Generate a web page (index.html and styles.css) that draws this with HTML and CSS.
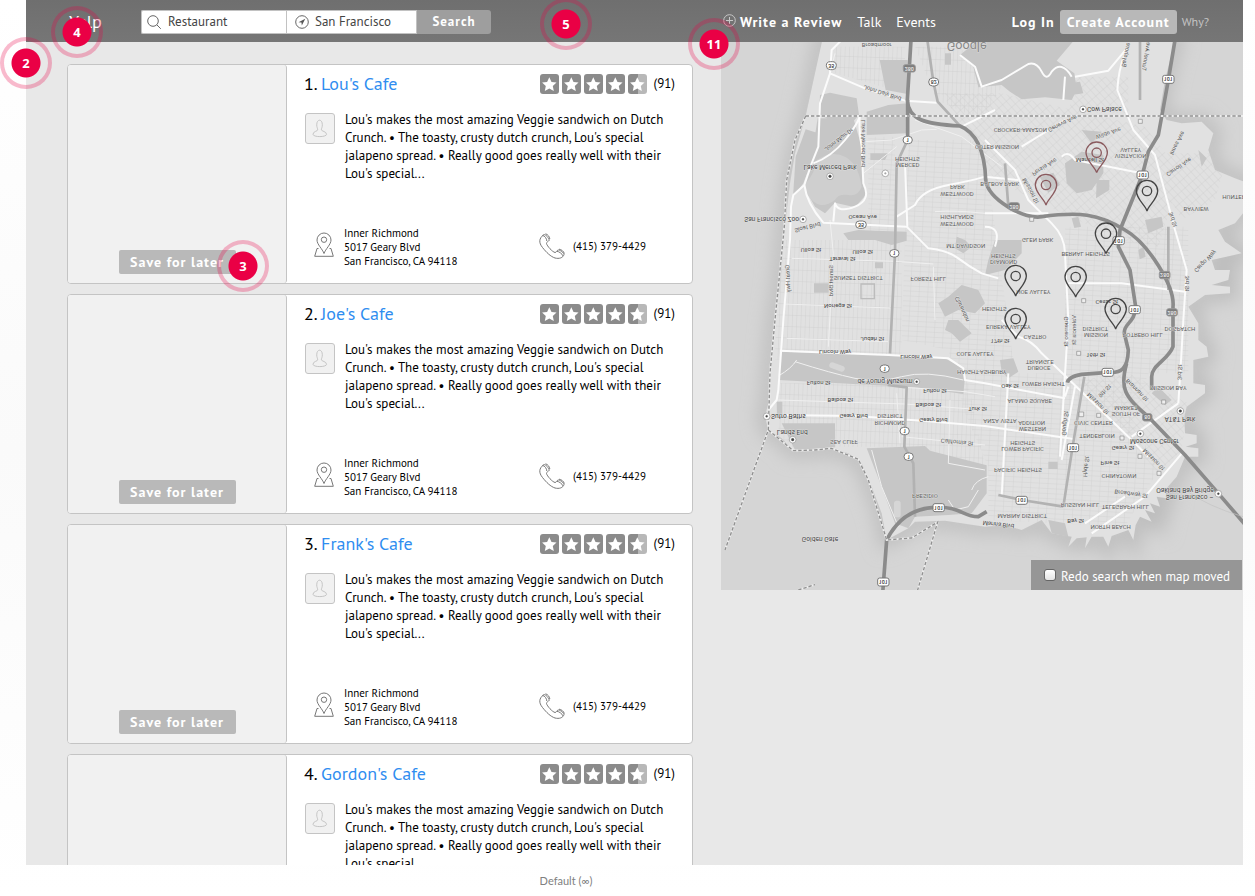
FILE: index.html
```html
<!DOCTYPE html>
<html lang="en">
<head>
<meta charset="utf-8">
<title>Yelp</title>
<link rel="stylesheet" href="styles.css">
</head>
<body>
<svg class="sprite" aria-hidden="true">
  <defs>
    <linearGradient id="half"><stop offset=".5" stop-color="#8b8b8b"/><stop offset=".5" stop-color="#b8b8b8"/></linearGradient>
    <symbol id="star" viewBox="0 0 19 20"><rect width="19" height="20" rx="3" fill="#8b8b8b"/><path fill="#fff" d="M9.300 3.200l2.200 4.800 5 .6-3.700 3.500 1 5-4.500-2.500-4.500 2.500 1-5L2.100 8.600l5-.6z"/></symbol>
    <symbol id="star-half" viewBox="0 0 19 20"><rect width="19" height="20" rx="3" fill="url(#half)"/><path fill="#fff" d="M9.300 3.200l2.200 4.800 5 .6-3.700 3.500 1 5-4.500-2.500-4.500 2.500 1-5L2.100 8.600l5-.6z"/></symbol>
    <symbol id="person" viewBox="0 0 30 31"><path fill="none" stroke="#c2c2c2" d="M11.500 11.500c0-6.500 6-6.500 6 0 0 3-1 3.500-1 5.500 0 1.500 5.500 1.500 5.500 4.700 0 3.300-14.500 3.300-14.500 0 0-3.200 5-3.200 5-4.700 0-2-1-2.500-1-5.500z"/></symbol>
    <symbol id="place" viewBox="0 0 20 25"><g fill="none" stroke="#777"><path d="M10 21.500C8.500 17 3 12.500 3 8a7 7 0 0 1 14 0c0 4.500-5.500 9-7 13.500z"/><circle cx="10" cy="7.700" r="2.700"/><path d="M4.500 16.500H3L.7 24.300h18.600L17 16.500h-1.500"/></g></symbol>
    <symbol id="phone" viewBox="0 0 26 26"><g fill="none" stroke="#777" stroke-linejoin="round"><path d="M4.500 1.800C0 5.500-.5 9.500 3.500 14.500s8 9 12.500 10.500c4 1 8 0 9-3.500.3-1.500-4.500-5-6-4.500-1.200.5-1.500 2.500-3 2.500-2.500-.5-8-6.500-8.500-9-.2-1.500 2-2 2.700-3.200C10.500 6 6.500.5 4.500 1.800z"/><path d="M3.800 2.500c1.700 0 4.200 3.500 4 5.500M6.500.8c2 .2 4.500 3.500 4.300 5.200M18 18.300c1.500 0 5.500 2.500 5.800 4.500M20 16.200c2 0 5 2.300 5.300 4.300"/></g></symbol>
    <symbol id="pin" viewBox="-35 -96 70 98" overflow="visible"><path d="M0 0C-4-16-32-36-32-60A32 32 0 1 1 32-60C32-36 4-16 0 0z"/><circle cy="-60" r="14"/></symbol>
    <pattern id="grid" width="26" height="15" patternUnits="userSpaceOnUse" patternTransform="rotate(3)"><path d="M0 0H26M0 0V15" fill="none" stroke="#cdcdcd" stroke-width="2"/></pattern>
    <pattern id="grid-wide" width="13" height="34" patternUnits="userSpaceOnUse" patternTransform="rotate(2)"><path d="M0 0H13M0 0V34" fill="none" stroke="#cdcdcd" stroke-width="2"/></pattern>
    <pattern id="grid-slant" width="15" height="24" patternUnits="userSpaceOnUse" patternTransform="rotate(-42)"><path d="M0 0H15M0 0V24" fill="none" stroke="#cdcdcd" stroke-width="2"/></pattern>
    <filter id="shore" x="-20%" y="-20%" width="140%" height="140%"><feGaussianBlur stdDeviation="26"/></filter>
  </defs>
</svg>

<main class="stage">
  <header class="nav">
    <a class="logo" href="#">Yelp</a>
    <form class="search">
      <label class="field field-what">
        <svg width="15" height="15" viewBox="0 0 15 15" aria-hidden="true"><g fill="none" stroke="#666"><circle cx="6" cy="6" r="5.300"/><path d="M9.800 9.800l4 4"/></g></svg>
        <input type="text" value="Restaurant" aria-label="Find">
      </label>
      <label class="field field-where">
        <svg width="14" height="14" viewBox="0 0 14 14" aria-hidden="true"><circle cx="7" cy="7" r="6.300" fill="none" stroke="#666"/><path fill="#555" d="M10.300 3.800L3.500 7.200l3 .4.300 3z"/></svg>
        <input type="text" value="San Francisco" aria-label="Near">
      </label>
      <button class="search-button" type="submit">Search</button>
    </form>
    <nav class="links">
      <a class="strong" href="#"><svg width="13" height="13" viewBox="0 0 13 13" aria-hidden="true"><g fill="none" stroke="#c8c8c8"><circle cx="6.500" cy="6.500" r="5.800"/><path d="M6.500 3v7M3 6.500h7"/></g></svg>Write a Review</a>
      <a href="#">Talk</a>
      <a href="#">Events</a>
    </nav>
    <div class="account">
      <a class="strong" href="#">Log In</a>
      <button class="create" type="button">Create Account</button>
      <a class="why" href="#">Why?</a>
    </div>
  </header>

  <div class="content">
    <section class="results">
      <article class="card">
        <div class="photo"><button class="save" type="button">Save for later</button></div>
        <div class="info">
          <div class="head"><h2>1. <a href="#">Lou's Cafe</a></h2><div class="rating"><svg><use href="#star"/></svg><svg><use href="#star"/></svg><svg><use href="#star"/></svg><svg><use href="#star"/></svg><svg><use href="#star-half"/></svg><span>(91)</span></div></div>
          <div class="review"><svg class="avatar"><use href="#person"/></svg><p>Lou's makes the most amazing Veggie sandwich on Dutch Crunch. • The toasty, crusty dutch crunch, Lou's special jalapeno spread. • Really good goes really well with their Lou's special...</p></div>
          <div class="contact"><svg class="place"><use href="#place"/></svg><address>Inner Richmond<br>5017 Geary Blvd<br>San Francisco, CA 94118</address><svg class="phone"><use href="#phone"/></svg><span>(415) 379-4429</span></div>
        </div>
      </article>
      <article class="card">
        <div class="photo"><button class="save" type="button">Save for later</button></div>
        <div class="info">
          <div class="head"><h2>2. <a href="#">Joe's Cafe</a></h2><div class="rating"><svg><use href="#star"/></svg><svg><use href="#star"/></svg><svg><use href="#star"/></svg><svg><use href="#star"/></svg><svg><use href="#star-half"/></svg><span>(91)</span></div></div>
          <div class="review"><svg class="avatar"><use href="#person"/></svg><p>Lou's makes the most amazing Veggie sandwich on Dutch Crunch. • The toasty, crusty dutch crunch, Lou's special jalapeno spread. • Really good goes really well with their Lou's special...</p></div>
          <div class="contact"><svg class="place"><use href="#place"/></svg><address>Inner Richmond<br>5017 Geary Blvd<br>San Francisco, CA 94118</address><svg class="phone"><use href="#phone"/></svg><span>(415) 379-4429</span></div>
        </div>
      </article>
      <article class="card">
        <div class="photo"><button class="save" type="button">Save for later</button></div>
        <div class="info">
          <div class="head"><h2>3. <a href="#">Frank's Cafe</a></h2><div class="rating"><svg><use href="#star"/></svg><svg><use href="#star"/></svg><svg><use href="#star"/></svg><svg><use href="#star"/></svg><svg><use href="#star-half"/></svg><span>(91)</span></div></div>
          <div class="review"><svg class="avatar"><use href="#person"/></svg><p>Lou's makes the most amazing Veggie sandwich on Dutch Crunch. • The toasty, crusty dutch crunch, Lou's special jalapeno spread. • Really good goes really well with their Lou's special...</p></div>
          <div class="contact"><svg class="place"><use href="#place"/></svg><address>Inner Richmond<br>5017 Geary Blvd<br>San Francisco, CA 94118</address><svg class="phone"><use href="#phone"/></svg><span>(415) 379-4429</span></div>
        </div>
      </article>
      <article class="card">
        <div class="photo"><button class="save" type="button">Save for later</button></div>
        <div class="info">
          <div class="head"><h2>4. <a href="#">Gordon's Cafe</a></h2><div class="rating"><svg><use href="#star"/></svg><svg><use href="#star"/></svg><svg><use href="#star"/></svg><svg><use href="#star"/></svg><svg><use href="#star-half"/></svg><span>(91)</span></div></div>
          <div class="review"><svg class="avatar"><use href="#person"/></svg><p>Lou's makes the most amazing Veggie sandwich on Dutch Crunch. • The toasty, crusty dutch crunch, Lou's special jalapeno spread. • Really good goes really well with their Lou's special...</p></div>
          <div class="contact"><svg class="place"><use href="#place"/></svg><address>Inner Richmond<br>5017 Geary Blvd<br>San Francisco, CA 94118</address><svg class="phone"><use href="#phone"/></svg><span>(415) 379-4429</span></div>
        </div>
      </article>
    </section>

    <section class="map">
      <svg class="map-art" viewBox="18 6 1566 1644" role="img" aria-label="Map of San Francisco, mirrored north to south">
        <defs>
          <path id="coast" d="M322 0L300 100 272 228 240 340 225 430 212 540 205 620 195 740 180 840 168 960 160 1090 150 1130 160 1170 200 1195 235 1232 300 1228 345 1225 400 1240 440 1270 470 1340 500 1420 515 1500 530 1492 580 1465 600 1445 690 1442 810 1460 870 1455 920 1470 980 1440 1010 1480 1070 1490 1060 1520 1085 1495 1115 1492 1110 1525 1130 1490 1165 1490 1180 1520 1190 1488 1240 1470 1255 1500 1262 1455 1275 1430 1310 1445 1290 1410 1320 1420 1305 1390 1335 1400 1325 1370 1355 1375 1350 1350 1385 1310 1410 1250 1450 1250 1450 1225 1412 1220 1445 1210 1445 1185 1410 1180 1408 1130 1415 1100 1470 1060 1470 1035 1435 1030 1435 960 1480 950 1475 920 1450 900 1450 850 1420 800 1470 765 1545 760 1545 740 1490 735 1540 720 1545 690 1500 690 1490 660 1580 640 1530 605 1510 570 1560 550 1600 500V430L1560 415 1500 390 1480 330 1495 280 1460 245 1400 250 1355 240 1335 210 1350 120 1380 0z"/>
          <clipPath id="land"><use href="#coast"/></clipPath>
        </defs>
        <rect width="1600" height="1660" fill="#d5d5d5"/>
        <use href="#coast" fill="none" stroke="#bdbdbd" stroke-width="44" filter="url(#shore)"/>
        <use href="#coast" fill="#e1e1e1"/>
        <g clip-path="url(#land)">
          <path fill="url(#grid-wide)" d="M190 600H560V960H180zM360 20H570V160L360 100zM600 20H735L780 80 860 140 800 240 665 180zM190 1030H760L810 1280 560 1220H190z"/>
          <path fill="url(#grid)" d="M580 300H800L840 560 900 1000 1300 1000 1250 1140 1330 1290 1230 1460 820 1440V1280L750 1120 700 930 560 900zM1050 560H1420V1000H1050zM460 290H540V600H460z"/>
          <path fill="url(#grid-slant)" d="M680 160H860L1290 260 1400 400 1330 620 1220 600 1000 500 840 420zM1090 1020L1240 1000 1420 1090 1400 1230 1330 1300zM1290 340H1540L1500 480 1400 540zM1080 110H1240V220H1060z"/>
        </g>
        <g fill="#c6c6c6">
          <path d="M315 165L345 158 425 175 432 225 400 260 312 225zM308 235L415 235 440 320 445 440 455 462 420 502 360 488 330 520 300 500 267 440 290 350zM272 268L310 280 305 325 265 430 234 470 242 350zM494 60H578V162L512 150zM455 215L520 195 577 190V280L455 285zM466 340H520L510 360H466zM385 580L430 570 480 572 575 575V602L530 615 480 600 400 600zM480 667h24v18h-24zM297 730h44v28h-44zM725 590L750 600 770 620 745 640 720 625zM670 790L700 770 740 735 790 750 810 790 780 820 730 810 690 830zM690 40h18v34h-18z"/>
          <path d="M735 45L790 0H1078L1025 62 1078 100 1085 150 1070 180 990 172 920 178 885 155 860 135 790 142 775 80zM1050 370L1100 335 1165 345 1165 400 1130 450 1085 460 1055 430zM975 412L1015 398 1035 435 1000 458zM1100 270L1160 275 1130 310zM1145 420h38v30l-40 25zM1062 130L1095 125 1105 160 1070 165zM840 600L920 600 920 640 870 690 810 705 820 660zM1290 540L1340 530 1345 560 1300 580zM1450 330L1475 355 1460 380zM1270 630l16-10 6 30-18 8zM1070 535l20-5 8 30-20 4z"/>
          <path d="M200 935L420 942 540 946 690 955 752 990 745 1062 600 1042 190 1020zM185 1085H202V1132L186 1128zM200 1150H360V1222L240 1230zM455 1225L630 1218 645 1232 815 1276V1360L770 1420 700 1425 600 1430 580 1465 540 1450 500 1340zM700 840L730 840 770 880 735 905 710 880 690 870zM855 960L895 955 910 995 880 1015 860 995zM1000 1440L1050 1450 1060 1490 1010 1480zM1000 1265h28v22h-28zM1330 1040L1370 1080 1350 1095 1310 1060z"/>
        </g>
        <path fill="#cfcfcf" d="M305 360Q350 330 390 350T440 440Q430 470 400 465T360 480Q320 510 290 480T272 430Q300 400 305 360z"/>
        <g fill="#d6d6d6"><rect x="342" y="972" width="48" height="18" rx="9" transform="rotate(20 366 981)"/><rect x="537" y="1382" width="20" height="50" rx="8"/></g>
        <path fill="none" stroke="#bcbcbc" stroke-width="4" d="M438 732h40v44h-40z"/>

        <g class="road minor">
          <path d="M450 305L530 300 620 270 665 268M345 100L360 40M445 400L545 320M345 540L355 640 340 920M230 655L540 664 655 672M210 792L525 804M215 895L520 905M190 1080L570 1092 810 1110M570 1042L750 1055 840 1070M545 1060L555 1210M705 1080L700 1270M655 680L660 840M660 515Q720 510 810 520M600 240L740 290 860 380M560 1190L810 1215"/>
          <path d="M240 965Q350 1000 420 1015T560 1010 745 1020M190 1008Q230 985 245 960M470 1230L500 1340 550 1460M700 1270L810 1290M770 1350Q780 1320 820 1310M700 1380L720 1410 760 1400 790 1350"/>
        </g>
        <g class="road white">
          <path d="M380 0L350 30 345 100 315 190 310 320 290 370 268 435 235 465 228 500 225 600 205 840 190 1050 185 1080 160 1110"/>
          <path d="M345 100L450 145 570 182 665 188M268 435Q275 490 325 548L575 560 640 625Q700 632 730 655T800 700L850 715"/>
          <path d="M570 370L577 560M545 530L600 495Q620 450 700 435T810 410L910 420M435 225Q430 260 440 320L445 430Q470 480 420 500T360 490L355 545M295 370Q350 350 390 300T435 225" />
          <path d="M195 932L520 945 700 955 745 985 750 1020 810 1030 1050 1075M190 1125L420 1128 620 1142 810 1158 1080 1198"/>
          <path d="M735 45L780 80 800 140 860 120 940 72Q965 65 980 95T1010 95Q1040 60 1070 110M1230 40Q1210 90 1207 150L1255 270 1320 345 1380 570 1415 690 1405 840 1400 930 1390 1090M1080 110L1180 92 1240 20M1045 180L1050 110"/>
          <path d="M840 620Q860 560 810 560M810 300L900 390 940 480 1010 550Q1050 590 1050 640L1060 840M840 210L740 260M920 320L1050 240M1040 350Q1060 330 1080 360L1280 400M810 520H1000M860 840L910 890Q950 900 980 940L1240 1190 1300 1250M1060 730H1220L1410 755M1060 840L1035 1250M1060 1040L1050 1070M1080 1040L1040 1260M880 1000L860 1370M1250 1190L1390 1090M1405 1235L1290 1370 1130 1480M1110 1450L1230 1370"/>
        </g>
        <g class="road grey"><path d="M578 300L545 370 540 640 525 940M518 1035L575 1042 570 1170 568 1220 595 1270 600 1430M637 0L655 125 668 185 735 258M1275 0V180M1045 1400L1072 1225 1108 1010M850 1365L920 1380 1045 1400M870 370L880 500M1360 560V750"/></g>
        <g class="road highway">
          <path d="M588 0L577 180C580 240 630 252 735 258 780 275 810 330 812 420 820 480 930 540 980 530 1090 515 1150 520 1230 570 1300 610 1380 740 1374 800V920C1360 960 1310 975 1310 1010V1050M578 180V300"/>
          <path d="M1380 0L1360 120 1330 285 1300 335 1282 405 1215 570 1210 620 1245 690 1262 800C1260 850 1225 850 1228 880L1240 930C1238 985 1220 1000 1180 997L1100 1003Q1060 1010 1057 1028M1235 970C1215 1040 1225 1070 1300 1130L1410 1245 1510 1360 1600 1465"/>
          <path d="M503 1660L515 1500C540 1450 580 1405 660 1402S740 1430 790 1430L815 1415"/>
        </g>
        <path class="ferry" d="M1410 1350Q1480 1400 1584 1430"/>
        <path class="boundary-base" d="M272 228H1600M272 228L240 300 215 420 208 560 190 740 178 860 165 1000 160 1170 30 1530M160 1170L235 1232 300 1230 350 1225 430 1258 460 1320 515 1500 590 1494 668 1446 605 1660M250 1650L300 1634"/>
        <path class="boundary" d="M272 228H1600M272 228L240 300 215 420 208 560 190 740 178 860 165 1000 160 1170 30 1530M160 1170L235 1232 300 1230 350 1225 430 1258 460 1320 515 1500 590 1494 668 1446 605 1660M250 1650L300 1634"/>

        <g class="label">
          <text x="485" y="15">Broadmoor</text><text class="big" x="755" y="20">Google</text>
          <text x="345" y="382" class="place-name">Lake Merced Park</text><text x="170" y="537" class="place-name">San Francisco Zoo</text>
          <text x="577" y="357">HEIGHTS</text><text x="578" y="377">MERCED</text><text x="727" y="443">PARK</text><text x="726" y="463">WESTWOOD</text>
          <text x="726" y="532">HIGHLANDS</text><text x="726" y="552">WESTWOOD</text><text x="752" y="618">MT DAVIDSON</text><text x="443" y="531" class="st">Ocean Ave</text>
          <text x="288" y="630" class="st">Ulloa St</text><text x="443" y="637" class="st">Ulloa St</text><text x="382" y="657" class="st">Taraval St</text><text x="430" y="714">SUNSET DISTRICT</text><text x="640" y="719">FOREST HILL</text><text x="369" y="798" class="st">Noriega St</text>
          <g transform="rotate(18 502 160)"><text x="502" y="160">John Daly Blvd</text></g><g transform="rotate(-38 372 300)"><text x="372" y="300">John Muir Dr</text></g><g transform="rotate(90 442 310)"><text x="442" y="310">Lake Merced Blvd</text></g><g transform="rotate(-14 278 563)"><text x="278" y="563">Sloat Blvd</text></g><g transform="rotate(88 217 716)"><text x="217" y="716">Great Hwy</text></g><g transform="rotate(90 346 722)"><text x="346" y="722">Sunset Blvd</text></g>
          <text x="1168" y="207" class="place-name">Cow Palace</text><text x="916" y="272">CROCKER-AMAZON</text><text x="846" y="322">OUTER MISSION</text><text x="1247" y="330">VALLEY</text><text x="1247" y="350">VISITACION</text>
          <text x="854" y="433">BALBOA PARK</text><text x="1443" y="507">BAYVIEW</text><text x="1562" y="471">HUNTERS</text><text x="968" y="600">GLEN PARK</text><text x="1112" y="642">BERNAL HEIGHTS</text><text x="865" y="649">HEIGHTS</text><text x="866" y="668">DIAMOND</text><text x="955" y="757">NOE VALLEY</text><text x="838" y="808">HEIGHTS</text><text x="1175" y="787" class="st">Cesar St</text>
          <g transform="rotate(-26 1043 252)"><text x="1043" y="252">Geneva Ave</text></g><g transform="rotate(-18 1180 281)"><text x="1180" y="281">Wilde Ave</text></g><text x="1125" y="360" class="st">Mansell St</text><g transform="rotate(-32 989 382)"><text x="989" y="382">Persia Ave</text></g><g transform="rotate(62 945 453)"><text x="945" y="453">Mission St</text></g><g transform="rotate(-62 1388 310)"><text x="1388" y="310">Innes Ave</text></g><g transform="rotate(-34 1392 382)"><text x="1392" y="382">Carroll Ave</text></g><g transform="rotate(72 1372 539)"><text x="1372" y="539">3rd St</text></g><g transform="rotate(-45 1472 665)"><text x="1472" y="665">Cargo Way</text></g><g transform="rotate(90 1415 730)"><text x="1415" y="730">3rd St</text></g><g transform="rotate(-78 1235 45)"><text x="1235" y="45">Bayshore</text></g><g transform="rotate(-80 1295 50)"><text x="1295" y="50">Tunnel Ave</text></g><g transform="rotate(65 740 808)"><text x="740" y="808">Clarendon</text></g>
          <text x="472" y="898" class="st">Judah St</text><text x="360" y="938" class="st">Lincoln Way</text><text x="604" y="951" class="st">Lincoln Way</text><text x="510" y="1023" class="place-name">de Young Museum</text><text x="311" y="1031" class="st">Fulton St</text><text x="660" y="1053" class="st">Fulton St</text><text x="376" y="1082" class="st">Balboa St</text><text x="640" y="1096" class="st">Balboa St</text><text x="220" y="1129" class="place-name">Sutro Baths</text><text x="416" y="1130" class="st">Geary Blvd</text><text x="655" y="1142" class="st">Geary Blvd</text><text x="525" y="1128">DISTRICT</text><text x="525" y="1149">RICHMOND</text><text x="232" y="1175" class="place-name">Lands End</text><text x="387" y="1208">SEA CLIFF</text><g transform="rotate(6 726 1208)"><text x="726" y="1208">California St</text></g><text x="630" y="1370">PRESIDIO</text><text x="315" y="1497" class="place-name">Golden Gate</text>
          <text x="780" y="943">COLE VALLEY</text><text x="800" y="997">HAIGHT-ASHBURY</text><text x="788" y="1109" class="st">Turk St</text><text x="880" y="862">EUREKA VALLEY</text><text x="960" y="891">CASTRO</text><text x="855" y="905" class="st">17th St</text><text x="974" y="967">TRIANGLE</text><text x="972" y="985">DUBOCE</text><text x="985" y="1033">LOWER HAIGHT</text><text x="885" y="1039" class="st">Oak St</text><text x="944" y="1085">ALAMO SQUARE</text><text x="855" y="1144">ANZA VISTA</text><text x="950" y="1149">ADDITION</text><text x="952" y="1169">WESTERN</text><text x="923" y="1209">HEIGHTS</text><text x="923" y="1229">LOWER PACIFIC</text><text x="909" y="1290">PACIFIC HEIGHTS</text><text x="922" y="1430">MARINA DISTRICT</text><g transform="rotate(6 850 1455)"><text x="850" y="1455" class="st">Marina Blvd</text></g>
          <text x="1141" y="867">DISTRICT</text><text x="1143" y="887">MISSION</text><text x="1283" y="885">POTRERO HILL</text><text x="1395" y="869">DOGPATCH</text><text x="1142" y="947" class="st">16th St</text><text x="1360" y="1045">MISSION BAY</text><text x="1233" y="1104">MARKET</text><text x="1233" y="1124">SOUTH OF</text><text x="1135" y="1151">CIVIC CENTER</text><text x="1146" y="1190">TENDERLOIN</text><text x="1395" y="1137" class="place-name">AT&amp;T Park</text><text x="1318" y="1204" class="place-name">Moscone Center</text><text x="1224" y="1226" class="st">Geary St</text><text x="1185" y="1270" class="st">Pine St</text><text x="1212" y="1309">CHINATOWN</text><g transform="rotate(8 1248 1363)"><text x="1248" y="1363">Broadway St</text></g><text x="1095" y="1397">RUSSIAN HILL</text><text x="1231" y="1401">TELEGRAPH HILL</text><text x="1187" y="1461">NORTH BEACH</text><text x="1082" y="1444" class="st">Bay St</text><text x="1410" y="1350" class="place-name">Oakland Bay Bridge</text><text x="1424" y="1372" class="place-name">San Francisco –</text>
          <g transform="rotate(45 1148 1092)"><text x="1148" y="1092">Mission St</text></g><g transform="rotate(45 1265 1052)"><text x="1265" y="1052">Brannan St</text></g><g transform="rotate(-45 1170 1054)"><text x="1170" y="1054">9th St</text></g><g transform="rotate(45 1315 1260)"><text x="1315" y="1260">Mission St</text></g><g transform="rotate(-84 1052 1150)"><text x="1052" y="1150">Gough St</text></g><g transform="rotate(-84 1115 1280)"><text x="1115" y="1280">Hyde St</text></g><g transform="rotate(90 1053 875)"><text x="1053" y="875">Guerrero St</text></g><g transform="rotate(90 1076 870)"><text x="1076" y="870">Valencia St</text></g><g transform="rotate(-88 1396 997)"><text x="1396" y="997">3rd St</text></g>
        </g>

        <g class="shield">
          <rect x="334" y="65" width="30" height="24" rx="12"/><text x="349" y="77">35</text><rect x="641" y="114" width="30" height="24" rx="12"/><text x="656" y="126">82</text><rect x="564" y="289" width="28" height="22" rx="11"/><text x="578" y="300">1</text><rect x="422" y="543" width="32" height="22" rx="11"/><text x="438" y="554">35</text><rect x="524" y="629" width="28" height="22" rx="11"/><text x="538" y="640">1</text>
          <rect x="495" y="975" width="28" height="22" rx="11"/><text x="509" y="986">1</text><rect x="555" y="1162" width="28" height="22" rx="11"/><text x="569" y="1173">1</text><rect x="567" y="1239" width="28" height="22" rx="11"/><text x="581" y="1250">1</text>
          <rect x="1343" y="106" width="34" height="24" rx="6"/><text x="1360" y="118">101</text><rect x="1266" y="393" width="34" height="24" rx="6"/><text x="1283" y="405">101</text><rect x="1194" y="590" width="34" height="24" rx="6"/><text x="1211" y="602">101</text><rect x="1242" y="797" width="34" height="24" rx="6"/><text x="1259" y="809">101</text><rect x="1161" y="985" width="34" height="24" rx="6"/><text x="1178" y="997">101</text><rect x="1057" y="1211" width="34" height="24" rx="6"/><text x="1074" y="1223">101</text><rect x="903" y="1369" width="34" height="24" rx="6"/><text x="920" y="1381">101</text><rect x="654" y="1391" width="34" height="24" rx="6"/><text x="671" y="1403">101</text><rect x="488" y="1614" width="34" height="24" rx="6"/><text x="505" y="1626">101</text>
        </g>
        <g class="shield dark"><rect x="565" y="74" width="36" height="22" rx="6"/><text x="583" y="86">280</text><rect x="881" y="488" width="32" height="22" rx="6"/><text x="897" y="500">280</text><rect x="1333" y="694" width="32" height="22" rx="6"/><text x="1349" y="706">280</text><rect x="1355" y="806" width="32" height="22" rx="6"/><text x="1371" y="818">280</text><rect x="1283" y="1121" width="28" height="22" rx="6"/><text x="1297" y="1132">80</text></g>
        <g class="poi"><circle cx="345" cy="409" r="10"/><circle cx="511" cy="400" r="10"/><circle cx="264" cy="538" r="10"/><circle cx="1104" cy="208" r="10"/><circle cx="605" cy="1025" r="9"/><circle cx="155" cy="1129" r="10"/><circle cx="233" cy="1199" r="10"/><circle cx="1396" cy="1113" r="10"/><circle cx="1276" cy="1181" r="10"/><circle cx="1510" cy="1361" r="10"/></g>
        <g class="dot"><circle cx="345" cy="409" r="4"/><path d="M507 400h8M511 396v8"/><circle cx="264" cy="538" r="3"/><circle cx="1104" cy="208" r="3"/><circle cx="605" cy="1025" r="3"/><circle cx="155" cy="1129" r="3"/><circle cx="233" cy="1199" r="4"/><circle cx="1396" cy="1113" r="4"/><circle cx="1276" cy="1181" r="3"/><circle cx="1510" cy="1361" r="3"/></g>
        <g class="station"><path d="M1270 238h12v12h-12zM944 532h12v12h-12zM1100 776h12v12h-12zM1085 934h12v12h-12zM1340 1080h12v12h-12zM1092 1116h14v14h-14zM1145 1120h12v12h-12zM1215 1188h12v12h-12zM1269 1243h12v12h-12zM1326 1294h12v12h-12z"/></g>
        <g class="pin red"><use href="#pin" x="1110" y="302" width="70" height="98"/><use href="#pin" x="958" y="399" width="70" height="98"/></g>
        <g class="pin"><use href="#pin" x="1261" y="417" width="70" height="98"/><use href="#pin" x="1138" y="545" width="70" height="98"/><use href="#pin" x="867" y="672" width="70" height="98"/><use href="#pin" x="1047" y="675" width="70" height="98"/><use href="#pin" x="1167" y="771" width="70" height="98"/><use href="#pin" x="867" y="801" width="70" height="98"/></g>
      </svg>
      <label class="redo"><input type="checkbox">Redo search when map moved</label>
    </section>
  </div>

  <span class="hotspot spot-edge">2</span>
  <span class="hotspot spot-save">3</span>
  <span class="hotspot spot-logo">4</span>
  <span class="hotspot spot-nav">5</span>
  <span class="hotspot spot-map">11</span>
</main>
<footer class="state">Default (∞)</footer>
</body>
</html>
```
FILE: styles.css
```css
* { box-sizing: border-box; }

body {
  margin: 0;
  height: 100vh;
  display: flex;
  flex-direction: column;
  overflow: hidden;
  background: linear-gradient(#fff, #fafafa 50%, #fff);
  color: #000;
  font: 13px/18px "PT Sans", "Noto Sans", sans-serif;
}

a { color: inherit; text-decoration: none; }
button, input { font: inherit; }
.sprite { position: absolute; width: 0; height: 0; }

.stage {
  position: relative;
  flex: 1;
  min-height: 0;
  margin: 0 12px 0 26px;
  background: #e8e8e8;
}

/* Top bar */
.nav {
  display: flex;
  align-items: center;
  height: 42px;
  padding: 2px 34px 0 43px;
  background: linear-gradient(#6f6f6f, #767676);
  color: #fff;
  font-size: 14px;
}
.logo { width: 72px; font-size: 18px; }
.search { display: flex; height: 24px; margin-right: 232px; }
.field {
  display: flex;
  align-items: center;
  gap: 6px;
  padding-left: 5px;
  background: #fff;
  border: 1px solid #c2c2c2;
}
.field-what { width: 145px; border-radius: 2px 0 0 2px; border-right: 0; }
.field-where { width: 131px; padding-left: 8px; }
.field input { width: 100%; min-width: 0; padding: 0; border: 0; outline: 0; background: none; color: #444; font-size: 13px; }
.field svg { flex: none; }
.search-button, .create, .save {
  height: 24px;
  padding: 0;
  border: 0;
  color: #fff;
  font-weight: 700;
  letter-spacing: 1px;
  white-space: nowrap;
}
.search-button { width: 74px; background: #9e9e9e; border-radius: 0 3px 3px 0; font-size: 13px; }
.links { display: flex; gap: 15px; white-space: nowrap; }
.links svg { margin-right: 4px; }
.strong { font-weight: 700; letter-spacing: 1px; }
.account { display: flex; align-items: center; gap: 5px; margin-left: auto; white-space: nowrap; }
.create { width: 117px; background: #b8b8b8; border-radius: 3px; }
.why { color: #c4c4c4; font-size: 12px; }

/* Page body */
.content {
  display: flex;
  align-items: flex-start;
  gap: 28px;
  height: calc(100% - 42px);
  padding-left: 41px;
  overflow: hidden;
}
.results { flex: 0 1 626px; display: flex; flex-direction: column; gap: 10px; padding-top: 22px; }
.card {
  display: flex;
  min-height: 220px;
  background: #fff;
  border: 1px solid #c4c4c4;
  border-radius: 4px;
}
.photo {
  flex: none;
  display: flex;
  align-items: flex-end;
  justify-content: center;
  width: 219px;
  padding-bottom: 9px;
  background: #f1f1f1;
  border-right: 1px solid #c4c4c4;
  border-radius: 3px;
}
.save { width: 117px; background: #b9b9b9; border-radius: 2px; font-size: 14px; }
.info { flex: 1; display: flex; flex-direction: column; padding: 7px 17px 15px; }
.head { display: flex; justify-content: space-between; align-items: center; height: 24px; }
.head h2 { margin: 0; font-size: 18px; font-weight: 400; line-height: 24px; }
.head a { color: #2f8df0; }
.rating { display: flex; align-items: center; gap: 3px; }
.rating svg { width: 19px; height: 20px; }
.rating span { margin-left: 4px; }
.review { display: flex; gap: 10px; margin-top: 15px; }
.review p { flex: 1; margin: 0; }
.avatar { flex: none; width: 30px; height: 31px; margin: 2px 0 0 1px; background: #f1f1f1; border: 1px solid #c4c4c4; border-radius: 3px; }
.contact { display: flex; align-items: center; margin: auto 0 0 10px; font-size: 11px; line-height: 14px; }
.contact address { flex: 1; font-style: normal; }
.place { width: 20px; height: 25px; margin: 0 10px 6px 0; }
.phone { width: 26px; height: 26px; margin: 0 8px 3px 0; }
.contact span { width: 102px; padding-bottom: 2px; }

/* Map */
.map { position: relative; flex: 1; min-width: 0; }
.map-art { display: block; width: 100%; height: auto; }
.road { fill: none; stroke-linejoin: round; }
.minor { stroke: #f0f0f0; stroke-width: 3; }
.white { stroke: #fbfbfb; stroke-width: 6; }
.grey { stroke: #b2b2b2; stroke-width: 8; }
.highway { stroke: #8b8b8b; stroke-width: 11; }
.ferry { fill: none; stroke: #c2c2c2; stroke-width: 2; }
.boundary-base { fill: none; stroke: #ededed; stroke-width: 6; }
.boundary { fill: none; stroke: #909090; stroke-width: 4; stroke-dasharray: 10 6; }
.map-art text {
  text-anchor: middle;
  dominant-baseline: central;
  transform: scaleY(-1);
  transform-box: fill-box;
  transform-origin: center;
  font-family: Roboto, sans-serif;
}
.label { fill: #5c5c5c; font-size: 18px; stroke: #e8e8e8; stroke-width: 2; paint-order: stroke; }
.label .place-name { font-size: 20px; fill: #444; }
.label .st { font-size: 18px; fill: #444; }
.label .big { font-size: 38px; fill: #888; }
.shield rect { fill: #fff; stroke: #777; stroke-width: 3; }
.shield text { fill: #333; font-size: 16px; font-weight: 500; }
.dark rect { fill: #7d7d7d; stroke: #999; }
.dark text { fill: #eee; }
.poi { fill: #fff; stroke: #8c8c8c; stroke-width: 2; }
.dot { fill: #444; stroke: #444; stroke-width: 1; }
.station { fill: #eee; stroke: #8c8c8c; stroke-width: 2; }
.pin { fill: none; stroke: #444; stroke-width: 4; }
.red { stroke: #8a5a5e; }
.redo {
  position: absolute;
  right: 1px;
  bottom: 0;
  display: flex;
  align-items: center;
  gap: 5px;
  height: 30px;
  padding: 3px 12px 0 13px;
  background: #969696;
  color: #fff;
}
.redo input {
  appearance: none;
  width: 12px;
  height: 12px;
  margin: 0 0 4px;
  background: linear-gradient(#fff, #e4e4e4);
  border: 1px solid #666;
  border-radius: 3px;
}

/* Numbered hotspots lying over the page */
.hotspot {
  position: absolute;
  display: grid;
  place-items: center;
  width: 52px;
  height: 52px;
  border: 4px solid rgba(233, 0, 70, .27);
  border-radius: 50%;
  background: radial-gradient(circle, #ea0045 14px, transparent 15px);
  color: #fff;
  font: 700 13px/16px "Open Sans", sans-serif;
}
.spot-edge { left: -26px; top: 37px; }
.spot-save { left: 191px; top: 240px; }
.spot-logo { left: 25px; top: 6px; }
.spot-nav { left: 514px; top: -2px; }
.spot-map { left: 662px; top: 18px; }

.state {
  height: 31px;
  padding-right: 123px;
  color: #808080;
  font: 11px/32px Lato, sans-serif;
  text-align: center;
}
```
